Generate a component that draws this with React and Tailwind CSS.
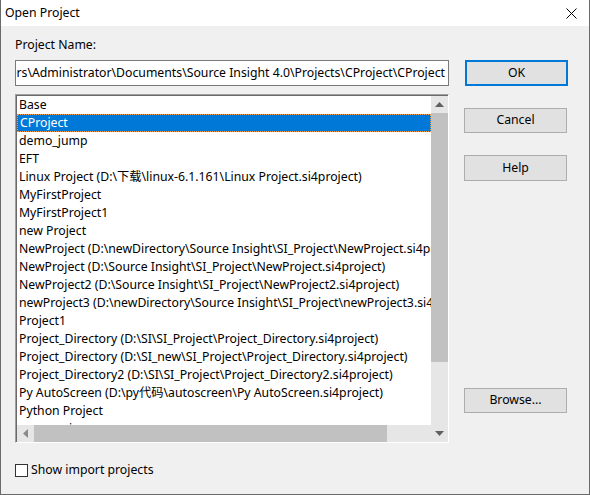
import React from "react";

const items = [
  "Base",
  "CProject",
  "demo_jump",
  "EFT",
  "Linux Project (D:\\下载\\linux-6.1.161\\Linux Project.si4project)",
  "MyFirstProject",
  "MyFirstProject1",
  "new Project",
  "NewProject (D:\\newDirectory\\Source Insight\\SI_Project\\NewProject.si4project)",
  "NewProject (D:\\Source Insight\\SI_Project\\NewProject.si4project)",
  "NewProject2 (D:\\Source Insight\\SI_Project\\NewProject2.si4project)",
  "newProject3 (D:\\newDirectory\\Source Insight\\SI_Project\\newProject3.si4project)",
  "Project1",
  "Project_Directory (D:\\SI\\SI_Project\\Project_Directory.si4project)",
  "Project_Directory (D:\\SI_new\\SI_Project\\Project_Directory.si4project)",
  "Project_Directory2 (D:\\SI\\SI_Project\\Project_Directory2.si4project)",
  "Py AutoScreen (D:\\py代码\\autoscreen\\Py AutoScreen.si4project)",
  "Python Project",
  "source_view",
];

const font = {
  fontFamily: '"Noto Sans", "Noto Sans CJK SC", sans-serif',
};

function Btn({ children, primary, className = "" }) {
  return (
    <div
      className={`w-[103px] flex items-center justify-center bg-[#e1e1e1] text-[12.25px] text-black ${
        primary ? "border-2 border-[#0078d7]" : "border border-[#adadad]"
      } ${className}`}
    >
      {children}
    </div>
  );
}

export default function App() {
  return (
    <div
      className="w-[590px] h-[495px] flex flex-col border-l border-r border-b border-[#6a6a6a] bg-[#f0f0f0] text-black overflow-hidden"
      style={font}
    >
      {/* Title bar */}
      <div className="h-[26px] bg-white flex items-center justify-between pl-[4px] pr-[12px]">
        <span className="text-[12.25px] leading-[16px]">Open Project</span>
        <svg width="11" height="11" viewBox="0 0 11 11">
          <path d="M0.5 0.5 L10.5 10.5 M10.5 0.5 L0.5 10.5" stroke="#000" strokeWidth="1" />
        </svg>
      </div>

      {/* Body */}
      <div className="flex-1 flex flex-col pl-[14px]">
        <div className="mt-[11px] h-[16px] text-[12.25px] leading-[16px]">Project Name:</div>

        <div className="mt-[7px] flex gap-[16px]">
          <div className="w-[434px] h-[26px] bg-white border border-[#7a7a7a] flex items-center justify-end overflow-hidden pr-[3px]">
            <span className="whitespace-nowrap text-[12.25px] leading-[16px]">
              C:\Users\Administrator\Documents\Source Insight 4.0\Projects\CProject\CProject
            </span>
          </div>
          <Btn primary className="h-[26px]">OK</Btn>
        </div>

        <div className="mt-[8px] flex gap-[15px]">
          {/* List box */}
          <div className="w-[434px] h-[349px] border-t border-l border-[#a0a0a0] border-r border-b border-r-white border-b-white">
            <div className="w-full h-full border-t border-l border-[#696969] flex">
              <div className="flex-1 flex flex-col min-w-0">
                <div className="h-[329px] bg-white overflow-hidden">
                  {items.map((it, i) => (
                    <div
                      key={i}
                      className={`h-[18px] flex items-center whitespace-nowrap text-[12.25px] leading-[16px] pl-[2px] ${
                        i === 1
                          ? "bg-[#0078d7] text-white border border-dotted border-[#f0a050]"
                          : ""
                      }`}
                    >
                      {it}
                    </div>
                  ))}
                </div>
                {/* Horizontal scrollbar */}
                <div className="h-[17px] bg-[#e6e6e6] flex">
                  <div className="w-[17px] flex items-center justify-center">
                    <svg width="5" height="9" viewBox="0 0 5 9">
                      <polygon points="5,0 5,9 0,4.5" fill="#8a8a8a" />
                    </svg>
                  </div>
                  <div className="w-[353px] bg-[#c1c1c1]" />
                  <div className="flex-1" />
                </div>
              </div>
              {/* Vertical scrollbar */}
              <div className="w-[17px] bg-[#e6e6e6] flex flex-col">
                <div className="h-[17px] flex items-center justify-center">
                  <svg width="9" height="5" viewBox="0 0 9 5">
                    <polygon points="0,5 9,5 4.5,0" fill="#606060" />
                  </svg>
                </div>
                <div className="h-[249px] bg-[#c1c1c1]" />
                <div className="flex-1" />
                <div className="h-[17px] flex items-center justify-center">
                  <svg width="9" height="5" viewBox="0 0 9 5">
                    <polygon points="0,0 9,0 4.5,5" fill="#606060" />
                  </svg>
                </div>
              </div>
            </div>
          </div>

          {/* Right buttons */}
          <div className="flex flex-col">
            <Btn className="mt-[14px] h-[25px]">Cancel</Btn>
            <Btn className="mt-[22px] h-[26px]">Help</Btn>
            <Btn className="mt-[207px] h-[25px]">Browse...</Btn>
          </div>
        </div>

        <div className="mt-[19px] flex items-center gap-[3px]">
          <div className="w-[13px] h-[13px] bg-white border border-[#333333]" />
          <span className="text-[12.25px] leading-[16px]">Show import projects</span>
        </div>
      </div>
    </div>
  );
}
